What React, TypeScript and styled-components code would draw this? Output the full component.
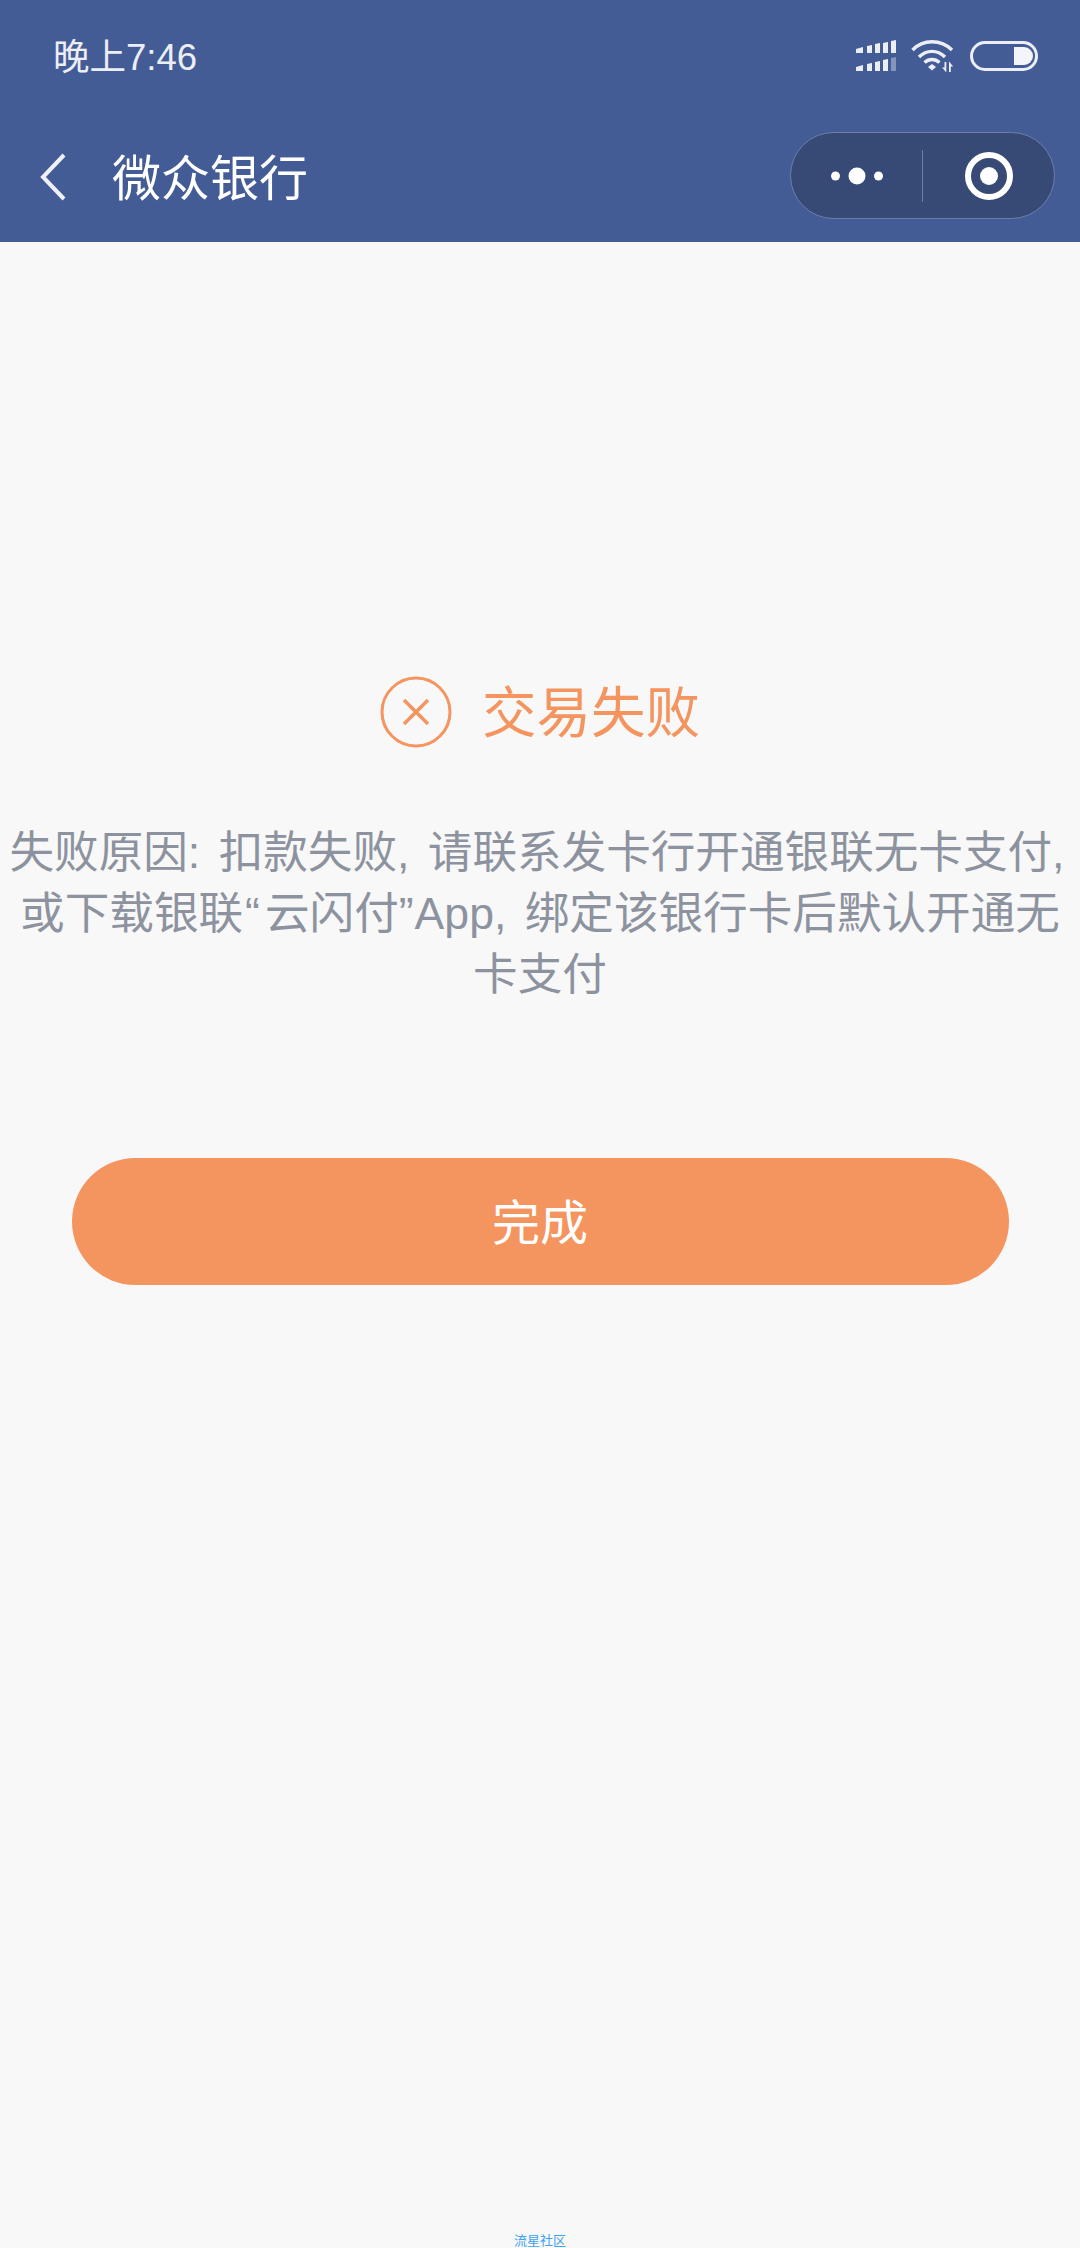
import React from 'react';
import styled, { createGlobalStyle } from 'styled-components';

const ORANGE = '#f4945f';
const FONT = `"Liberation Sans", "Noto Sans CJK SC", sans-serif`;

const GlobalStyle = createGlobalStyle`
    html, body {
        margin: 0;
        padding: 0;
        background: #f8f8f8;
    }
`;

const Page = styled.div`
    display: flex;
    flex-direction: column;
    width: 1080px;
    height: 2248px;
    overflow: hidden;
    background: #f8f8f8;
    font-family: ${FONT};
`;

const Header = styled.header`
    display: flex;
    flex-direction: column;
    height: 242px;
    background: #445c95;
    color: #fff;
`;

const StatusBar = styled.div`
    display: flex;
    align-items: center;
    justify-content: space-between;
    height: 56px;
    padding: 28px 42px 28px 53px;
`;

const Time = styled.span`
    padding-top: 4px;
    font-size: 36.5px;
    line-height: 56px;
    color: #eceef5;
`;

const StatusIcons = styled.div`
    display: flex;
    align-items: center;
    gap: 15px;
`;

const NavBar = styled.div`
    display: flex;
    align-items: center;
    height: 87px;
    padding: 0 25px 0 40px;
    margin-top: 20px;
`;

const BackIcon = styled.svg`
    width: 26px;
    height: 48px;
    flex: none;
    margin-top: 2px;
`;

const Title = styled.h1`
    flex: 1;
    margin: 0 0 0 46px;
    padding-top: 8px;
    font-size: 49px;
    font-weight: 400;
    line-height: 87px;
    color: #fff;
`;

const Capsule = styled.div`
    display: flex;
    align-items: center;
    box-sizing: border-box;
    width: 265px;
    height: 87px;
    border: 1px solid #6c7fa9;
    border-radius: 44px;
    background: #364a75;
`;

const CapsuleSide = styled.div`
    display: flex;
    align-items: center;
    justify-content: center;
    flex: 1;
`;

const Divider = styled.div`
    width: 1px;
    height: 52px;
    background: #6c7fa9;
`;

const Main = styled.main`
    display: flex;
    flex: 1;
    flex-direction: column;
    align-items: center;
    padding-top: 434px;
`;

const ResultRow = styled.div`
    display: flex;
    align-items: center;
    gap: 30px;
    height: 72px;
`;

const ResultText = styled.span`
    padding-top: 4px;
    font-size: 54.5px;
    line-height: 72px;
    color: ${ORANGE};
`;

const Reason = styled.p`
    margin: 74px 0 0;
    font-size: 44.6px;
    line-height: 61px;
    text-align: center;
    white-space: nowrap;
    word-spacing: 6px;
    color: #8c939f;
`;

const FirstLine = styled.span`
    padding-right: 6px;
`;

const OpenQuote = styled.span`
    margin-right: 5px;
    margin-left: 2px;
`;

const CloseQuote = styled.span`
    margin-right: 1px;
`;

const DoneButton = styled.button`
    width: 937px;
    height: 127px;
    margin-top: 153px;
    padding: 0 0 6px;
    border: 0;
    border-radius: 64px;
    background: ${ORANGE};
    color: #fff;
    font-family: inherit;
    font-size: 48px;
`;

const Footer = styled.div`
    margin-top: auto;
    height: 14px;
    font-size: 13px;
    line-height: 14px;
    color: #3fa2ee;
`;

const SignalIcon = () => (
    <svg width="40" height="32" viewBox="0 0 40 32">
        <g fill="#eceef5">
            <path d="M0 9l7-2v6H0zM11 6l5-1v8h-5zM19 4l5-1v10h-5zM27 3l5-1v11h-5zM35 1l5-1v13h-5z" />
            <path d="M0 27l7-2v6H0zM11 24l5-1v8h-5zM19 22l5-1v10h-5zM27 20l5-1v12h-5z" />
            <path d="M35 18l5-1v14h-5z" opacity="0.4" />
        </g>
    </svg>
);

const WifiIcon = () => (
    <svg width="44" height="34" viewBox="0 0 44 34">
        <g fill="none" stroke="#eceef5" strokeWidth="3.4">
            <path d="M1.500 11C12 0 30 0 41 11" />
            <path d="M8 18c7.500-7.500 18.500-7.500 26 0" />
            <path d="M13.500 23.500c4.500-4 10.500-4 15 0" />
        </g>
        <path d="M17 28l4-3 4 3-4 3.500z" fill="#eceef5" />
        <path d="M33.500 23h1.800v10.500L31 28.500h2.500zM38 22.500l4.200 5h-2.400V33H38z" fill="#eceef5" />
    </svg>
);

const BatteryIcon = () => (
    <svg width="68" height="30" viewBox="0 0 68 30">
        <rect x="1.500" y="1.500" width="65" height="27" rx="13.500" fill="none" stroke="#eceef5" strokeWidth="3" />
        <path d="M44 6h10a9 9 0 0 1 0 18H44z" fill="#f4f5fa" />
    </svg>
);

const App = () => (
    <Page>
        <GlobalStyle />
        <Header>
            <StatusBar>
                <Time>晚上7:46</Time>
                <StatusIcons>
                    <SignalIcon />
                    <WifiIcon />
                    <BatteryIcon />
                </StatusIcons>
            </StatusBar>
            <NavBar>
                <BackIcon viewBox="0 0 26 48">
                    <path d="M24 2L3 24l21 22" fill="none" stroke="#f0f1f6" strokeWidth="4" />
                </BackIcon>
                <Title>微众银行</Title>
                <Capsule>
                    <CapsuleSide>
                        <svg width="52" height="18" viewBox="0 0 52 18">
                            <g fill="#fff">
                                <circle cx="4.500" cy="9" r="4.500" />
                                <circle cx="26" cy="9" r="8.500" />
                                <circle cx="47.500" cy="9" r="4.500" />
                            </g>
                        </svg>
                    </CapsuleSide>
                    <Divider />
                    <CapsuleSide>
                        <svg width="48" height="48" viewBox="0 0 48 48">
                            <circle cx="24" cy="24" r="21" fill="none" stroke="#fff" strokeWidth="6" />
                            <circle cx="24" cy="24" r="9" fill="#fff" />
                        </svg>
                    </CapsuleSide>
                </Capsule>
            </NavBar>
        </Header>
        <Main>
            <ResultRow>
                <svg width="72" height="72" viewBox="0 0 72 72">
                    <circle cx="36" cy="36" r="34" fill="none" stroke={ORANGE} strokeWidth="3" />
                    <path d="M24 24l24 24M48 24L24 48" fill="none" stroke={ORANGE} strokeWidth="3.500" />
                </svg>
                <ResultText>交易失败</ResultText>
            </ResultRow>
            <Reason>
                <FirstLine>失败原因: 扣款失败, 请联系发卡行开通银联无卡支付,</FirstLine>
                <br />
                或下载银联<OpenQuote>“</OpenQuote>云闪付<CloseQuote>”</CloseQuote>App, 绑定该银行卡后默认开通无
                <br />
                卡支付
            </Reason>
            <DoneButton>完成</DoneButton>
            <Footer>流星社区</Footer>
        </Main>
    </Page>
);

export default App;
